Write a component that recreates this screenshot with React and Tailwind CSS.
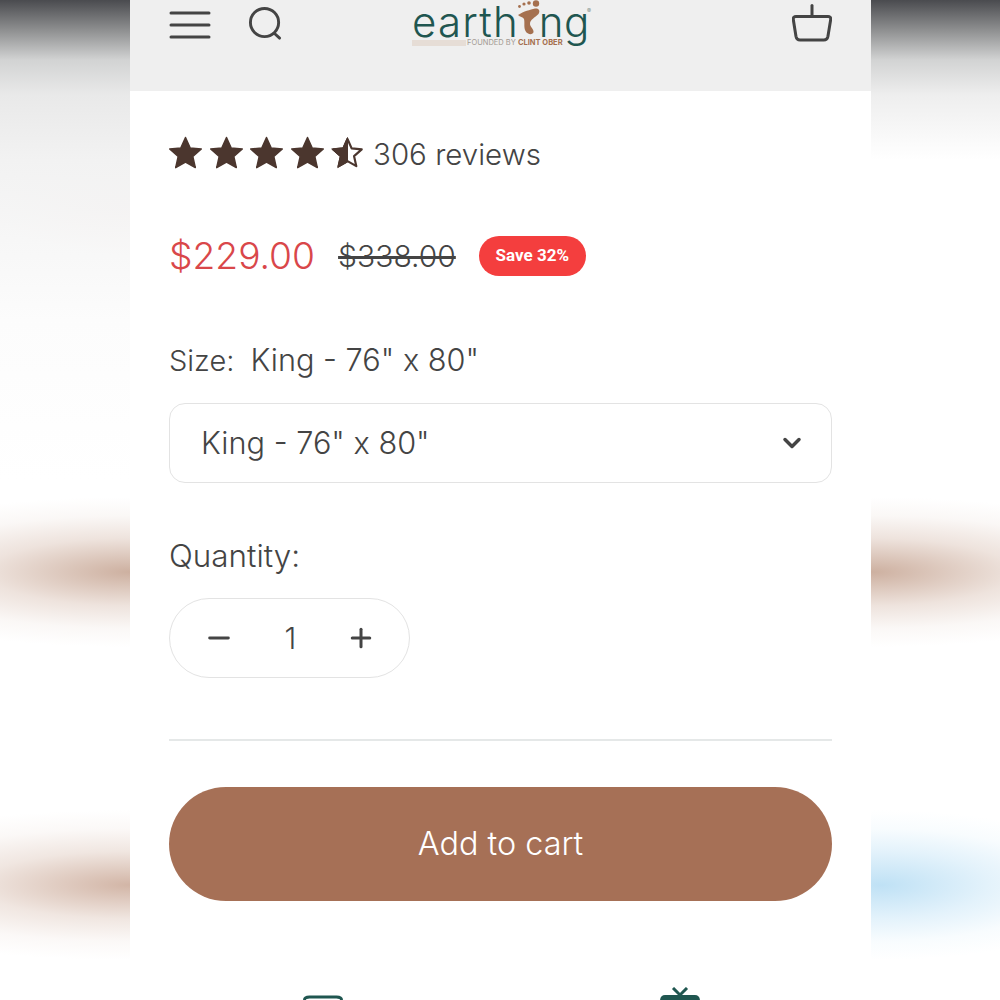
import { ChevronDown, Minus, Plus } from 'lucide-react'

const STAR = 'M17 1.5l4.6 10.4 11.2 1.1-8.5 7.5 2.5 11.1L17 26l-9.8 5.6 2.5-11.1L1.2 13l11.2-1.1z'

function Star({ half }) {
  return (
    <svg width="35" height="34" viewBox="0 0 34 34" className="shrink-0">
      {half ? (
        <>
          <path d={STAR} fill="none" stroke="#4b362e" strokeWidth="2.4" strokeLinejoin="round" transform="translate(1.7 1.7) scale(.9)" />
          <path d="M17 1.5v24.5l-9.8 5.6 2.5-11.1L1.2 13l11.2-1.1z" fill="#4b362e" stroke="#4b362e" strokeLinejoin="round" />
        </>
      ) : (
        <path d={STAR} fill="#4b362e" stroke="#4b362e" strokeWidth="1.5" strokeLinejoin="round" />
      )}
    </svg>
  )
}

function Logo() {
  return (
    <div className="relative w-[180px] h-[50px] text-[#1f5650]">
      <div className="flex items-start pt-[5px] text-[42px] leading-[34px] font-light">
        <span className="tracking-[1.200px]">earth</span>
        <svg width="26" height="40" viewBox="0 0 26 40" className="shrink-0 mt-[-5px] mx-[-3px]">
          <path d="M2 15C8 11 14 10 19 8.500c4-.5 5.500 2.500 3.500 5.500C19 18 14 19 14 24c0 3 4 5 3.500 8-.5 3-6 3-8-1-2-4-.5-8-1.500-12-1-2-4-2-6-4z" fill="#a5704f" />
          <circle cx="20" cy="3.500" r="3.200" fill="#a5704f" />
          <circle cx="13" cy="3" r="1.800" fill="#a5704f" />
          <circle cx="8" cy="4" r="1.600" fill="#a5704f" />
          <circle cx="3.500" cy="6.500" r="1.400" fill="#a5704f" />
        </svg>
        <span className="tracking-[0.500px]">ng</span>
      </div>
      <span className="absolute left-[175px] top-[8px] text-[6px] leading-[6px] text-[#7d8f8b]">®</span>
      <div className="absolute left-0 top-[39px] flex items-center">
        <div className="w-[54px] h-[6px] bg-[#e6ddd6]" />
        <span className="ml-[1px] text-[7.500px] leading-[7px] whitespace-nowrap text-[#a39a92]">
          FOUNDED BY <b className="text-[#a5704f]">CLINT OBER</b>
        </span>
      </div>
    </div>
  )
}

export default function App() {
  return (
    <div className="flex h-screen overflow-hidden bg-white font-['Inter',sans-serif] text-[#444444]">
      {/* blurred backdrop, left */}
      <div className="w-[130px] shrink-0 bg-[linear-gradient(180deg,#4a4b4f_0px,#8e8f90_30px,#d2d3d3_60px,#e9e9e9_95px,#f2f2f2_160px,rgba(250,250,250,0.6)_320px,rgba(255,255,255,0)_480px),radial-gradient(ellipse_320px_75px_at_130px_572px,#cdb0a0,rgba(224,204,193,0.55)_45%,rgba(232,218,210,0.2)_75%,rgba(205,176,160,0)),radial-gradient(ellipse_340px_75px_at_130px_885px,#d2b5a6,rgba(228,210,200,0.55)_45%,rgba(236,222,215,0.2)_75%,rgba(210,181,166,0)),radial-gradient(ellipse_140px_50px_at_130px_205px,#fbf0ee,rgba(251,238,235,0))]" />

      <div className="w-[741px] shrink-0 flex flex-col">
        <header className="h-[91px] shrink-0 bg-[#efefef] px-[39px] flex items-start">
          <div className="flex items-start gap-[37px] pt-[7px]">
            <svg width="42" height="36" viewBox="0 0 42 36" fill="none" stroke="#444444" strokeWidth="3" strokeLinecap="round">
              <path d="M2 6h38M2 18h38M2 30h38" />
            </svg>
            <svg width="35" height="35" viewBox="0 0 36 36" fill="none" stroke="#444444" strokeWidth="3" strokeLinecap="round" className="mt-[-1px]">
              <circle cx="17" cy="17" r="14.5" />
              <path d="M27 28l5.5 5" />
            </svg>
          </div>
          <div className="ml-[129px]">
            <Logo />
          </div>
          <svg width="40" height="40" viewBox="0 0 40 40" fill="none" stroke="#444444" strokeWidth="3" strokeLinecap="round" strokeLinejoin="round" className="mt-[3px] ml-auto">
            <path d="M20 2.500v11" />
            <path d="M4 13.500h32c1.800 0 3 1.300 2.700 3l-2.800 17c-.4 2-1.800 3.500-4 3.500H8c-2.200 0-3.600-1.500-4-3.500L1.300 16.500C1 14.800 2.200 13.500 4 13.500z" />
          </svg>
        </header>

        <main className="px-[39px] flex flex-col">
          <div className="flex items-center mt-[45px] h-[34px] ml-[-1px]">
            <div className="flex gap-[5.500px]">
              <Star />
              <Star />
              <Star />
              <Star />
              <Star half />
            </div>
            <span className="ml-[8px] pt-[3px] text-[29.500px] leading-none font-light">306 reviews</span>
          </div>

          <div className="flex items-center mt-[66px] h-[40px]">
            <span className="text-[37.200px] leading-none font-light text-[#d9474a]">$229.00</span>
            <span className="ml-[23px] text-[30px] leading-none font-light line-through">$338.00</span>
            <span className="ml-[23px] h-[40px] w-[107px] rounded-full bg-[#f43e3e] text-white text-[17px] font-bold flex items-center justify-center font-['Roboto',sans-serif]">
              Save 32%
            </span>
          </div>

          <div className="mt-[64px] h-[40px] leading-[40px] font-light flex items-baseline">
            <span className="text-[29px]">Size:</span>
            <span className="ml-[16px] text-[30.700px]">King - 76" x 80"</span>
          </div>

          <div className="mt-[23px] h-[80px] rounded-[16px] border border-[#e3e3e3] flex items-center justify-between pl-[31px] pr-[25px]">
            <span className="text-[30.700px] font-light">King - 76" x 80"</span>
            <ChevronDown size={28} strokeWidth={3} />
          </div>

          <div className="mt-[53px] text-[31.400px] leading-[40px] font-light">Quantity:</div>

          <div className="mt-[22px] w-[241px] h-[80px] rounded-full border border-[#e3e3e3] flex items-center justify-between pl-[33px] pr-[33px]">
            <Minus size={32} strokeWidth={2.200} />
            <span className="text-[30px] font-light">1</span>
            <Plus size={30} strokeWidth={2.400} />
          </div>

          <div className="mt-[61px] h-[2px] bg-[#e5e8e8]" />

          <button type="button" className="mt-[46px] h-[114px] rounded-full bg-[#a67056] text-white text-[32.400px] font-light">
            Add to cart
          </button>

          {/* feature icons cut off by the fold */}
          <div className="flex items-start mt-[94px] ml-[134px] overflow-visible">
            <svg width="40" height="20" viewBox="0 0 40 20" fill="none" stroke="#1f5650" strokeWidth="3">
              <path d="M1.500 12V5c0-2 2-3 5-3h27c3 0 5 1 5 3v7" />
            </svg>
            <svg width="42" height="20" viewBox="0 0 42 20" className="ml-[316px] mt-[-8px]">
              <path d="M14 1l7 7 7-7" fill="none" stroke="#1f5650" strokeWidth="3" />
              <path d="M1 20v-6c0-4 2-6 5-6h30c3 0 5 2 5 6v6z" fill="#1f5650" />
            </svg>
          </div>
        </main>
      </div>

      {/* blurred backdrop, right */}
      <div className="flex-1 bg-[linear-gradient(180deg,#4a4b4f_0px,#8e8f90_30px,#d2d3d3_60px,#eeeeee_95px,rgba(255,255,255,0)_160px),radial-gradient(ellipse_320px_75px_at_0px_572px,#cdb0a0,rgba(224,204,193,0.55)_45%,rgba(232,218,210,0.2)_75%,rgba(205,176,160,0)),radial-gradient(ellipse_240px_75px_at_10px_885px,#bfe1f5,rgba(205,232,248,0.55)_45%,rgba(220,240,250,0.2)_75%,rgba(191,225,245,0))]" />
    </div>
  )
}
